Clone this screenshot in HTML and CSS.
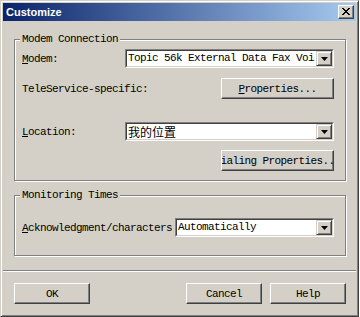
FILE: index.html
```html
<!DOCTYPE html>
<html lang="en">
<head>
  <meta charset="UTF-8" />
  <meta name="viewport" content="width=device-width, initial-scale=1.0" />
  <title>Customize</title>
  <link rel="stylesheet" href="styles.css">
</head>
<body>
  <div class="window">
    <div class="titlebar">
      <span class="title">Customize</span>
      <span class="close">
        <svg width="8" height="7" viewBox="0 0 8 7" shape-rendering="crispEdges">
          <path fill="#000" d="M0 0h2v1H0z M6 0h2v1H6z M1 1h2v1H1z M5 1h2v1H5z M2 2h4v1H2z M3 3h2v1H3z M2 4h4v1H2z M1 5h2v1H1z M5 5h2v1H5z M0 6h2v1H0z M6 6h2v1H6z"/>
        </svg>
      </span>
    </div>

    <div class="group group-modem">
      <span class="legend">Modem Connection</span>
      <div class="row row-modem">
        <span class="label"><u>M</u>odem:</span>
        <div class="combo combo-wide">
          <div class="combo-field">
            <span class="combo-text">Topic 56k External Data Fax Voi</span>
            <span class="drop"><svg width="7" height="4" viewBox="0 0 7 4"><path d="M0 0h7L3.5 4z" fill="#000"/></svg></span>
          </div>
        </div>
      </div>
      <div class="row row-tele">
        <span class="label">TeleService-specific:</span>
        <div class="button wide-button"><span><u>P</u>roperties...</span></div>
      </div>
      <div class="row row-location">
        <span class="label"><u>L</u>ocation:</span>
        <div class="combo combo-wide">
          <div class="combo-field">
            <span class="combo-text cjk">我的位置</span>
            <span class="drop"><svg width="7" height="4" viewBox="0 0 7 4"><path d="M0 0h7L3.5 4z" fill="#000"/></svg></span>
          </div>
        </div>
      </div>
      <div class="row row-dialing">
        <span class="label"></span>
        <div class="button wide-button"><span>Dialing Properties...</span></div>
      </div>
    </div>

    <div class="group group-monitor">
      <span class="legend">Monitoring Times</span>
      <div class="row row-ack">
        <span class="label"><u>A</u>cknowledgment/characters</span>
        <div class="combo combo-narrow">
          <div class="combo-field">
            <span class="combo-text">Automatically</span>
            <span class="drop"><svg width="7" height="4" viewBox="0 0 7 4"><path d="M0 0h7L3.5 4z" fill="#000"/></svg></span>
          </div>
        </div>
      </div>
    </div>

    <div class="separator"></div>

    <div class="button-row">
      <div class="button"><span>OK</span></div>
      <div class="button cancel"><span>Cancel</span></div>
      <div class="button"><span>Help</span></div>
    </div>
  </div>
</body>
</html>
```

FILE: styles.css
```css
body {
  margin: 0;
  background: #ffffff;
}
.window {
  width: 359px;
  height: 317px;
  box-sizing: border-box;
  background: #d4d0c8;
  border: 1px solid;
  border-color: #d4d0c8 #404040 #404040 #d4d0c8;
  box-shadow: inset 1px 1px 0 #ffffff, inset -1px -1px 0 #808080;
  padding: 2px;
  display: flex;
  flex-direction: column;
  font-family: "Liberation Mono", monospace;
  font-size: 11px;
  letter-spacing: -0.6px;
  color: #000;
}
.titlebar {
  height: 18px;
  display: flex;
  align-items: center;
  justify-content: space-between;
  padding: 0 2px 0 3px;
  background: linear-gradient(to right, #0a246a, #a6caf0);
}
.title {
  font-family: "Liberation Sans", Arial, sans-serif;
  font-weight: bold;
  font-size: 11px;
  letter-spacing: 0;
  color: #ffffff;
}
.close {
  width: 16px;
  height: 14px;
  box-sizing: border-box;
  display: flex;
  align-items: center;
  justify-content: center;
  padding: 0 1px 1px 0;
  background: #d4d0c8;
  border: 1px solid;
  border-color: #ffffff #404040 #404040 #ffffff;
  box-shadow: inset -1px -1px 0 #808080;
}
.group {
  display: flex;
  flex-direction: column;
  margin: 0 10px 0 11px;
  padding: 0 11px 0 7px;
  border: 1px solid #808080;
  box-shadow: 1px 1px 0 #ffffff, inset 1px 1px 0 #ffffff;
}
.group-modem {
  margin-top: 18px;
  padding-bottom: 9px;
}
.group-monitor {
  margin-top: 14px;
  padding-bottom: 18px;
}
.legend {
  align-self: flex-start;
  line-height: 12px;
  margin: -7px 0 -5px -2px;
  padding: 0 2px;
  background: #d4d0c8;
}
.row {
  display: flex;
  align-items: center;
}
.row-modem { margin-top: 9px; }
.row-tele { margin-top: 10px; }
.row-location { margin-top: 23px; }
.row-dialing { margin-top: 9px; }
.row-ack { margin-top: 22px; }
.label {
  flex: 1;
  white-space: nowrap;
}
.combo {
  height: 19px;
  box-sizing: border-box;
  display: flex;
  border: 1px solid;
  border-color: #808080 #ffffff #ffffff #808080;
}
.combo-wide { width: 209px; }
.combo-narrow { width: 159px; }
.combo-field {
  flex: 1;
  display: flex;
  min-width: 0;
  border: 1px solid;
  border-color: #404040 #d4d0c8 #d4d0c8 #404040;
  background: #ffffff;
}
.combo-text {
  flex: 1;
  min-width: 0;
  overflow: hidden;
  white-space: nowrap;
  padding-left: 1px;
  line-height: 15px;
}
.cjk {
  font-family: "Noto Sans CJK SC", sans-serif;
  font-size: 12px;
  letter-spacing: 0;
}
.drop {
  width: 16px;
  height: 15px;
  box-sizing: border-box;
  flex-shrink: 0;
  display: flex;
  align-items: center;
  justify-content: center;
  background: #d4d0c8;
  border: 1px solid;
  border-color: #d4d0c8 #404040 #404040 #d4d0c8;
  box-shadow: inset 1px 1px 0 #ffffff, inset -1px -1px 0 #808080;
}
.button {
  width: 76px;
  height: 21px;
  box-sizing: border-box;
  display: flex;
  align-items: center;
  justify-content: center;
  overflow: hidden;
  white-space: nowrap;
  background: #d4d0c8;
  border: 1px solid;
  border-color: #ffffff #404040 #404040 #ffffff;
  box-shadow: inset -1px -1px 0 #808080;
}
.wide-button {
  width: 113px;
}
.button span {
  flex-shrink: 0;
}
.separator {
  margin-top: 14px;
  border-top: 1px solid #808080;
  border-bottom: 1px solid #ffffff;
}
.button-row {
  display: flex;
  gap: 8px;
  margin-top: 11px;
  padding: 0 10px 0 11px;
}
.cancel {
  margin-left: auto;
}
```
